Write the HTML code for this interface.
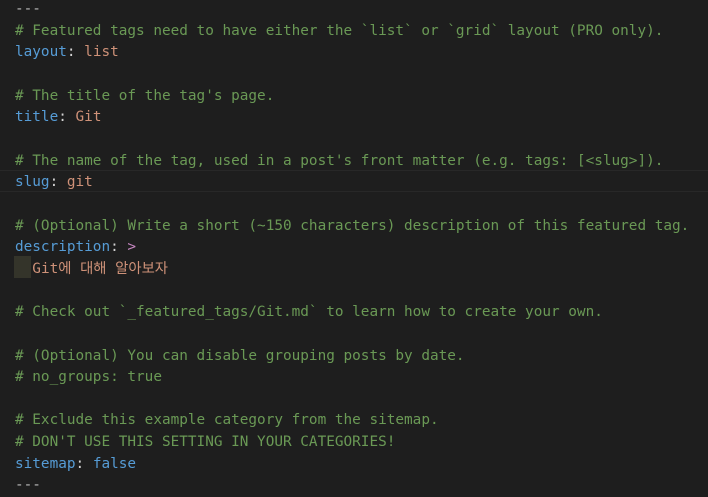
<!DOCTYPE html>
<html><head><meta charset="utf-8"><style>
html,body{margin:0;padding:0;background:#1e1e1e;width:708px;height:496px;overflow:hidden}
.c{position:absolute;left:15px;top:-1px;font-family:"DejaVu Sans Mono","Noto Sans CJK KR",monospace;font-size:14.37px;line-height:21.65px;color:#d4d4d4;white-space:pre}
.m{color:#6a9955}.k{color:#569cd6}.s{color:#ce9178}.p{color:#c586c0}.d{color:#bbbbbb}
.cur{position:absolute;left:0;right:0;top:170px;height:20px;border-top:1px solid #282828;border-bottom:1px solid #282828}
.ig{position:absolute;left:14px;top:256px;width:17px;height:22px;background:#34342a}
</style></head><body>
<div class="cur"></div><div class="ig"></div>
<div class="c"><span class="d">---</span>
<span class="m"># Featured tags need to have either the `list` or `grid` layout (PRO only).</span>
<span class="k">layout</span>: <span class="s">list</span>

<span class="m"># The title of the tag's page.</span>
<span class="k">title</span>: <span class="s">Git</span>

<span class="m"># The name of the tag, used in a post's front matter (e.g. tags: [&lt;slug&gt;]).</span>
<span class="k">slug</span>: <span class="s">git</span>

<span class="m"># (Optional) Write a short (~150 characters) description of this featured tag.</span>
<span class="k">description</span>: <span class="p">&gt;</span>
  <span class="s">Git에 대해 알아보자</span>

<span class="m"># Check out `_featured_tags/Git.md` to learn how to create your own.</span>

<span class="m"># (Optional) You can disable grouping posts by date.</span>
<span class="m"># no_groups: true</span>

<span class="m"># Exclude this example category from the sitemap.</span>
<span class="m"># DON'T USE THIS SETTING IN YOUR CATEGORIES!</span>
<span class="k">sitemap</span>: <span class="k">false</span>
<span class="d">---</span></div>
</body></html>
